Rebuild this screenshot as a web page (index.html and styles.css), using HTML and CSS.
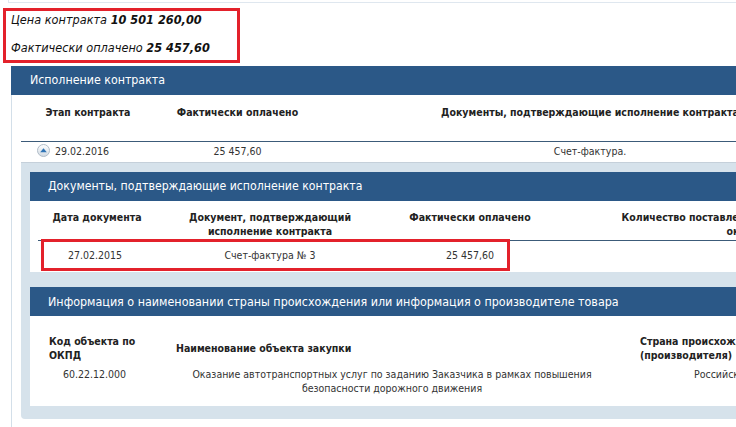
FILE: index.html
```html
<!DOCTYPE html>
<html lang="ru">
<head>
<meta charset="utf-8">
<link rel="stylesheet" href="styles.css">
</head>
<body>
<div class="page">
  <div class="prev-panel"></div>

  <div class="price-box">
    <p class="price-line">Цена контракта <b>10 501 260,00</b></p>
    <p class="price-line">Фактически оплачено <b>25 457,60</b></p>
  </div>

  <section class="panel">
    <div class="panel-head">Исполнение контракта</div>
    <div class="panel-body">
      <table class="main-table">
        <colgroup>
          <col class="mc1"><col class="mc2"><col class="mc3">
        </colgroup>
        <thead>
          <tr>
            <th>Этап контракта</th>
            <th>Фактически оплачено</th>
            <th>Документы, подтверждающие исполнение контракта</th>
          </tr>
        </thead>
        <tbody>
          <tr>
            <td class="stage"><span class="toggle"><svg width="13" height="13" viewBox="0 0 13 13"><defs><linearGradient id="g" x1="0" y1="0" x2="0" y2="1"><stop offset="0" stop-color="#ffffff"/><stop offset="1" stop-color="#d0d9e2"/></linearGradient></defs><circle cx="6.5" cy="6.5" r="6" fill="url(#g)" stroke="#b0bcc8" stroke-width="1"/><path d="M3.2 8.2 L6.5 4.2 L9.8 8.2 Z" fill="#2f74b5"/></svg></span>29.02.2016</td>
            <td class="center">25 457,60</td>
            <td class="center">Счет-фактура.</td>
          </tr>
        </tbody>
      </table>

      <div class="details">
        <section class="sub-panel">
          <div class="sub-head">Документы, подтверждающие исполнение контракта</div>
          <div class="sub-body">
            <table class="doc-table">
              <colgroup>
                <col class="dc1"><col class="dc2"><col class="dc3"><col class="dc4">
              </colgroup>
              <thead>
                <tr>
                  <th>Дата документа</th>
                  <th>Документ, подтверждающий<br>исполнение контракта</th>
                  <th>Фактически оплачено</th>
                  <th class="qty">Количество поставленного товара, объем выполненной<br>оказанной услуги</th>
                </tr>
              </thead>
              <tbody>
                <tr>
                  <td class="date">27.02.2015</td>
                  <td class="center">Счет-фактура № 3</td>
                  <td class="center">25 457,60</td>
                  <td></td>
                </tr>
              </tbody>
            </table>
            <div class="highlight"></div>
          </div>
        </section>

        <section class="sub-panel">
          <div class="sub-head sub-head-long">Информация о наименовании страны происхождения или информация о производителе товара</div>
          <div class="sub-body">
            <table class="origin-table">
              <colgroup>
                <col class="oc1"><col class="oc2"><col class="oc3">
              </colgroup>
              <thead>
                <tr>
                  <th class="okpd">Код объекта по<br>ОКПД</th>
                  <th class="name">Наименование объекта закупки</th>
                  <th class="country">Страна происхождения<br>(производителя)</th>
                </tr>
              </thead>
              <tbody>
                <tr>
                  <td class="okpd-val">60.22.12.000</td>
                  <td class="name-val">Оказание автотранспортных услуг по заданию Заказчика в рамках повышения<br>безопасности дорожного движения</td>
                  <td class="country-val">Российская Федерация</td>
                </tr>
              </tbody>
            </table>
          </div>
        </section>
      </div>
    </div>
  </section>
</div>
</body>
</html>
```

FILE: styles.css
```css
html, body {
  margin: 0;
  padding: 0;
  overflow: hidden;
  background: #ffffff;
}

.page {
  width: 1000px;
  font-family: "DejaVu Sans Condensed", "DejaVu Sans", sans-serif;
  font-stretch: condensed;
  color: #333333;
  font-size: 10.5px;
}

.prev-panel {
  margin-left: 8px;
  width: 728px;
  height: 2px;
  border-left: 1px solid #dfe7ef;
  border-bottom: 1px solid #dfe7ef;
}

.price-box {
  margin: 5px 0 0 3px;
  width: 226px;
  height: 49px;
  border: 3px solid #e3212b;
  display: flex;
  flex-direction: column;
  gap: 10px;
  padding-left: 5px;
  box-sizing: content-box;
}

.price-line {
  margin: 0;
  font-size: 12.6px;
  line-height: 18px;
  font-style: italic;
  color: #111111;
}

.price-line b {
  font-weight: bold;
}

.panel {
  margin-top: 3px;
  margin-left: 11px;
}

.panel-head {
  height: 29px;
  line-height: 29px;
  background: #2b5887;
  color: #ffffff;
  font-size: 12.3px;
  padding-left: 19px;
}

.panel-body {
  border-left: 1px solid #d3dfe9;
  padding-left: 9px;
  padding-bottom: 12px;
}

table {
  border-collapse: collapse;
  table-layout: fixed;
}

th, td {
  padding: 0;
  font-size: 10.5px;
  line-height: 14px;
}

th {
  font-weight: bold;
  color: #222222;
}

.center {
  text-align: center;
}

/* main table */
.main-table {
  width: 839px;
}

.mc1 { width: 134px; }
.mc2 { width: 165px; }
.mc3 { width: 540px; }

.main-table thead th {
  height: 46px;
  vertical-align: top;
  padding-top: 10px;
  box-sizing: border-box;
  border-bottom: 1px solid #3c5b79;
  text-align: center;
  white-space: nowrap;
}

.main-table tbody td {
  height: 18px;
  padding-top: 2px;
  vertical-align: top;
  border-bottom: 1px solid #c5d0da;
}

.stage {
  padding-left: 16px !important;
  text-align: left;
}

.toggle {
  display: inline-block;
  vertical-align: -2px;
  margin-right: 5px;
}

.toggle svg {
  display: block;
}

/* details area */
.details {
  background: #d6e2eb;
  padding: 9px 0 13px 9px;
  border-bottom-left-radius: 4px;
  display: flex;
  flex-direction: column;
  gap: 15px;
}

.sub-head {
  height: 29px;
  line-height: 29px;
  background: #2b5887;
  color: #ffffff;
  font-size: 12.2px;
  padding-left: 18px;
}

.sub-head-long {
  font-size: 12.4px;
}

.sub-body {
  position: relative;
  background: #ffffff;
  padding-left: 8px;
}

/* documents table */
.doc-table {
  width: 956px;
}

.dc1 { width: 118px; }
.dc2 { width: 228px; }
.dc3 { width: 172px; }
.dc4 { width: 438px; }

.doc-table thead th {
  height: 40px;
  box-sizing: border-box;
  vertical-align: top;
  padding-top: 9px;
  text-align: center;
  border-bottom: 1px solid #3c5b79;
}

.doc-table th.qty {
  white-space: nowrap;
}

.doc-table tbody td {
  height: 31px;
  vertical-align: top;
  padding-top: 7px;
  box-sizing: border-box;
}

.date {
  padding-left: 30px !important;
}

.highlight {
  position: absolute;
  left: 11px;
  top: 38px;
  width: 463px;
  height: 26px;
  border: 3px solid #e3212b;
}

/* origin table */
.origin-table {
  width: 842px;
}

.oc1 { width: 122px; }
.oc2 { width: 460px; }
.oc3 { width: 260px; }

.origin-table thead th {
  vertical-align: middle;
  text-align: left;
  padding-top: 18px;
  padding-bottom: 5px;
}

.origin-table th.okpd { padding-left: 11px; }
.origin-table th.name { padding-left: 16px; }
.origin-table th.country { padding-left: 20px; white-space: nowrap; }

.origin-table tbody td {
  vertical-align: top;
  padding-bottom: 11px;
}

.okpd-val {
  text-align: center;
  padding-left: 11px !important;
  padding-right: 20px !important;
}

.name-val {
  text-align: center;
  padding-left: 16px !important;
  padding-right: 12px !important;
}

.country-val {
  padding-left: 74px !important;
  white-space: nowrap;
}
```
